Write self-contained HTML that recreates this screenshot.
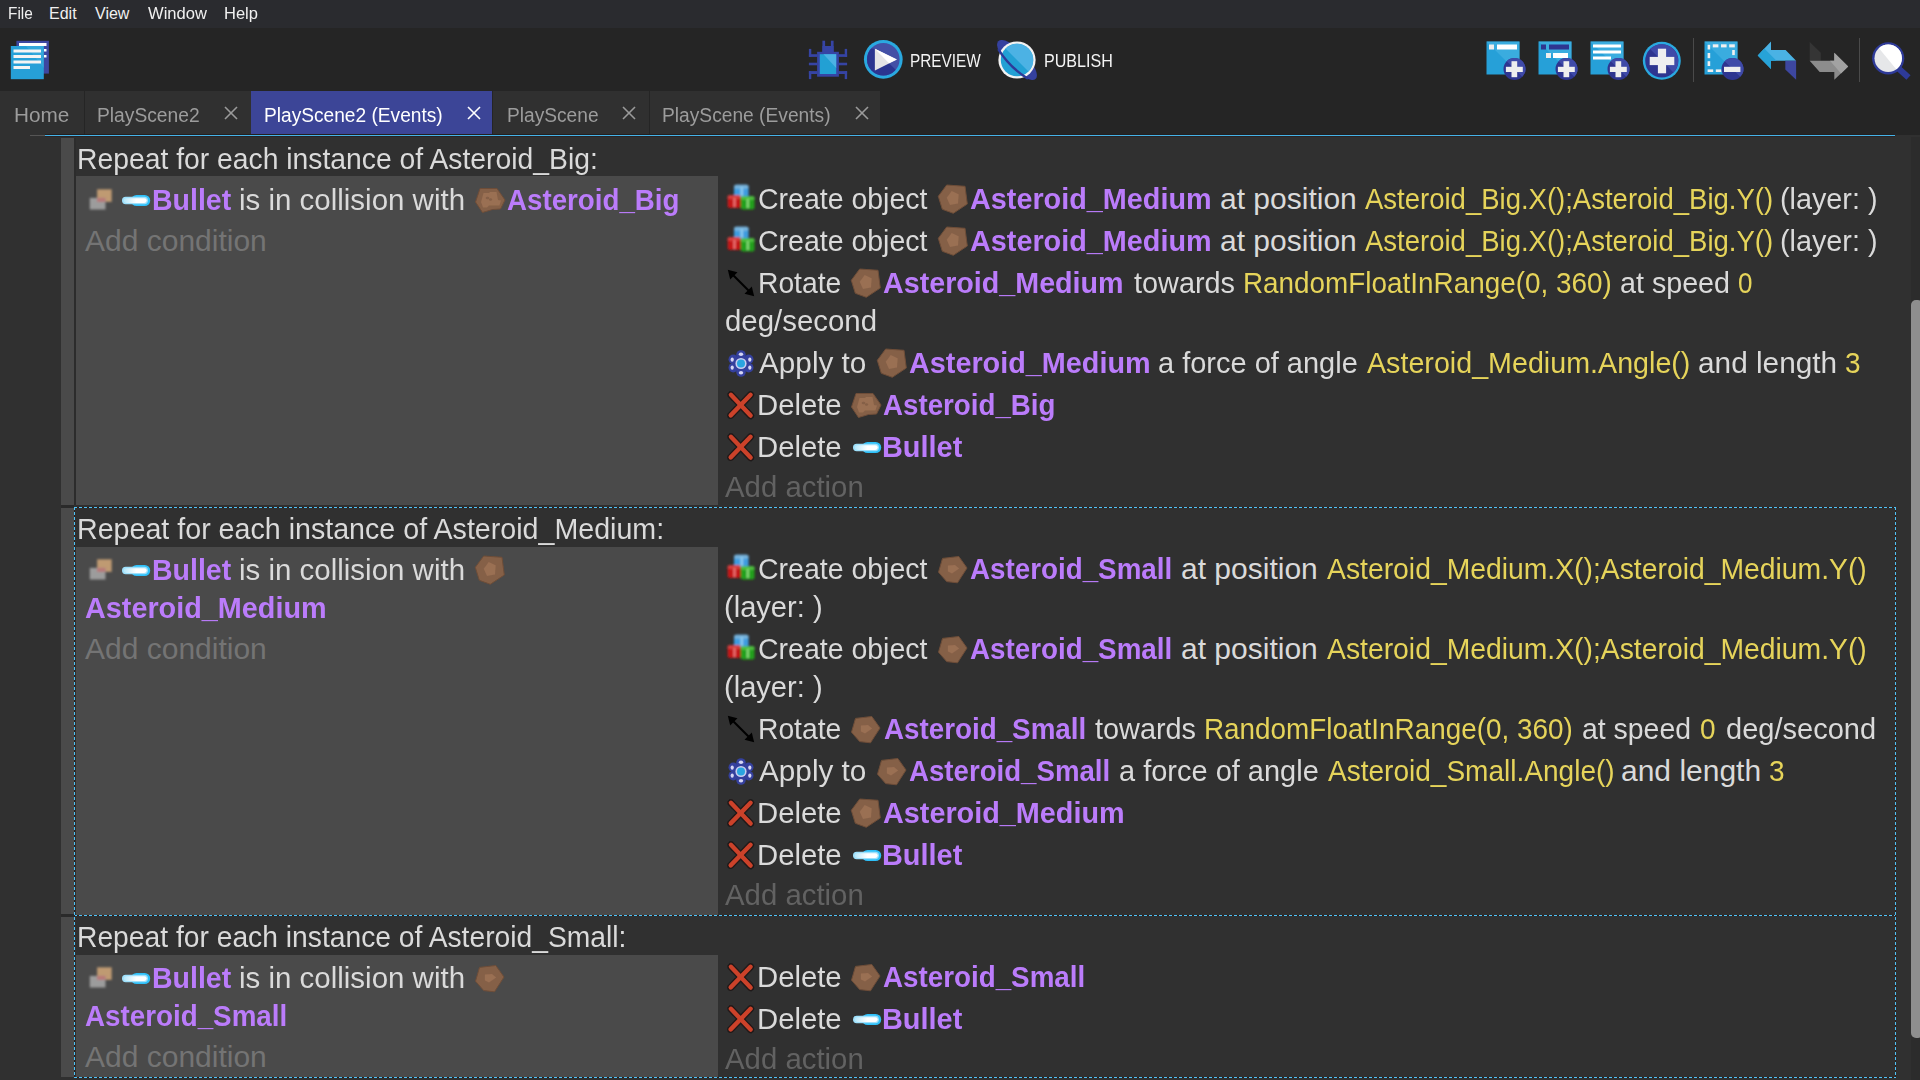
<!DOCTYPE html>
<html><head><meta charset="utf-8"><title>GDevelop</title>
<style>
html,body{margin:0;padding:0;}
body{width:1920px;height:1080px;overflow:hidden;position:relative;background:#303030;font-family:"Liberation Sans",sans-serif;}
.r{position:absolute;}
.t{position:absolute;white-space:pre;transform-origin:0 0;font-family:"Liberation Sans",sans-serif;}
.ic{position:absolute;overflow:visible;}
.dash-h{position:absolute;height:1px;background:repeating-linear-gradient(90deg,#4fc3f7 0 3px,#2a201c 3px 5px);}
.dash-v{position:absolute;width:1px;background:repeating-linear-gradient(180deg,#4fc3f7 0 3px,#2a201c 3px 5px);}
</style></head>
<body>
<!-- menubar -->
<div class="r" style="left:0;top:0;width:1920px;height:28px;background:#2a2b2f"></div>
<!-- toolbar + tabbar -->
<div class="r" style="left:0;top:28px;width:1920px;height:107px;background:#252525"></div>
<!-- tabs -->
<div class="r" style="left:0;top:91px;width:84px;height:44px;background:#303030"></div>
<div class="r" style="left:85px;top:91px;width:166px;height:44px;background:#303030"></div>
<div class="r" style="left:251px;top:91px;width:241px;height:44px;background:#3c4597"></div>
<div class="r" style="left:493px;top:91px;width:156px;height:44px;background:#303030"></div>
<div class="r" style="left:650px;top:91px;width:230px;height:44px;background:#303030"></div>
<!-- tab close X -->
<svg class="ic" style="left:224px;top:106px" width="14" height="14" viewBox="0 0 14 14"><g stroke="#9a9a9a" stroke-width="1.6"><line x1="1" y1="1" x2="13" y2="13"/><line x1="13" y1="1" x2="1" y2="13"/></g></svg>
<svg class="ic" style="left:467px;top:106px" width="14" height="14" viewBox="0 0 14 14"><g stroke="#ffffff" stroke-width="1.6"><line x1="1" y1="1" x2="13" y2="13"/><line x1="13" y1="1" x2="1" y2="13"/></g></svg>
<svg class="ic" style="left:622px;top:106px" width="14" height="14" viewBox="0 0 14 14"><g stroke="#9a9a9a" stroke-width="1.6"><line x1="1" y1="1" x2="13" y2="13"/><line x1="13" y1="1" x2="1" y2="13"/></g></svg>
<svg class="ic" style="left:855px;top:106px" width="14" height="14" viewBox="0 0 14 14"><g stroke="#9a9a9a" stroke-width="1.6"><line x1="1" y1="1" x2="13" y2="13"/><line x1="13" y1="1" x2="1" y2="13"/></g></svg>
<!-- tab underline -->
<div class="r" style="left:45px;top:134px;width:1850px;height:1px;background:#221f1f"></div>
<div class="r" style="left:30px;top:135px;width:15px;height:1px;background:#555"></div>
<div class="r" style="left:45px;top:135px;width:1850px;height:1px;background:#45b3e8"></div>
<div class="r" style="left:45px;top:136px;width:1850px;height:1px;background:#2a2424"></div>

<!-- scrollbar -->
<div class="r" style="left:1911px;top:137px;width:9px;height:943px;background:#2c2c2c"></div>
<div class="r" style="left:1911px;top:300px;width:12px;height:738px;background:#8e8e8e;border-radius:5px"></div>

<!-- event handles -->
<div class="r" style="left:61px;top:138px;width:13px;height:367px;background:#4a4a4a"></div>
<div class="r" style="left:61px;top:508px;width:13px;height:406px;background:#4a4a4a"></div>
<div class="r" style="left:61px;top:917px;width:13px;height:160px;background:#4a4a4a"></div>
<div class="r" style="left:61px;top:505px;width:13px;height:3px;background:#2a2a2a"></div>
<div class="r" style="left:61px;top:914px;width:13px;height:3px;background:#2a2a2a"></div>
<!-- condition columns -->
<div class="r" style="left:76px;top:176px;width:642px;height:329px;background:#4a4a4a"></div>
<div class="r" style="left:76px;top:547px;width:642px;height:368px;background:#4a4a4a"></div>
<div class="r" style="left:76px;top:955px;width:642px;height:122px;background:#4a4a4a"></div>
<div class="r" style="left:74px;top:138px;width:2px;height:367px;background:#2c2c2c"></div>
<!-- dashed selection borders -->
<div class="dash-h" style="left:74px;top:507px;width:1822px"></div>
<div class="dash-h" style="left:74px;top:915px;width:1822px"></div>
<div class="dash-h" style="left:74px;top:1077px;width:1822px"></div>
<div class="dash-v" style="left:74px;top:507px;height:571px"></div>
<div class="dash-v" style="left:1895px;top:507px;height:571px"></div>

<!-- toolbar icons -->
<!-- logo -->
<svg class="ic" style="left:10px;top:40px" width="40" height="40" viewBox="0 0 40 40">
 <rect x="6.4" y="0.8" width="32.5" height="32.8" fill="#3d47a0"/>
 <rect x="9" y="3" width="27.5" height="3" fill="#fff"/>
 <rect x="34" y="9" width="2.5" height="2.5" fill="#fff"/>
 <rect x="34" y="15" width="2.5" height="2.5" fill="#fff"/>
 <rect x="0.8" y="6" width="33" height="33.2" fill="#26a0d8"/>
 <polygon points="0.8,6 33.8,6 33.8,28 16,6" fill="#42b0e0" opacity="0.5"/>
 <rect x="3.5" y="9.5" width="27.5" height="3" fill="#f4f4f4"/>
 <rect x="3.5" y="15" width="27.5" height="3" fill="#f4f4f4"/>
 <rect x="3.5" y="20.5" width="27.5" height="3" fill="#f4f4f4"/>
 <rect x="3.5" y="26" width="16.5" height="3" fill="#f4f4f4"/>
</svg>
<!-- debug bug -->
<svg class="ic" style="left:808px;top:40px" width="40" height="40" viewBox="0 0 40 40">
 <g fill="#3644a4">
  <rect x="14.4" y="0.7" width="2.7" height="12"/>
  <rect x="22.9" y="0.7" width="2.7" height="12"/>
  <rect x="14.4" y="6" width="11.2" height="7"/>
  <rect x="9.1" y="11.8" width="21.8" height="24.9"/>
  <rect x="0.9" y="8.9" width="2.4" height="8"/>
  <rect x="0.9" y="14.2" width="8.5" height="2.7"/>
  <rect x="0.9" y="22.7" width="8.5" height="2.6"/>
  <rect x="0.9" y="31.1" width="8.5" height="2.9"/>
  <rect x="0.9" y="31.1" width="2.4" height="8"/>
  <rect x="36.7" y="8.9" width="2.4" height="8"/>
  <rect x="30.6" y="14.2" width="8.5" height="2.7"/>
  <rect x="30.6" y="22.7" width="8.5" height="2.6"/>
  <rect x="30.6" y="31.1" width="8.5" height="2.9"/>
  <rect x="36.7" y="31.1" width="2.4" height="8"/>
 </g>
 <rect x="11.8" y="14.2" width="16.4" height="19.8" fill="#22a0d4"/>
 <polygon points="15.5,14.2 28.2,14.2 28.2,28" fill="#4cb2e4"/>
</svg>
<!-- preview -->
<svg class="ic" style="left:864px;top:40px" width="40" height="40" viewBox="0 0 40 40">
 <defs><clipPath id="pvc"><circle cx="19.3" cy="19.3" r="16.3"/></clipPath></defs>
 <circle cx="19.3" cy="19.3" r="19.35" fill="#2aa9e0"/>
 <circle cx="19.3" cy="19.3" r="16.3" fill="#4350a6"/>
 <polygon points="0,8 10.9,8.7 10.9,30.4 25,23.3 34,32 19.3,40 0,40" fill="#2b3590" clip-path="url(#pvc)"/>
 <polygon points="10.9,8.7 32.9,19.4 10.9,30.4" fill="#e4e4e6"/>
 <polygon points="10.9,8.7 32.9,19.4 25,23.3" fill="#ffffff"/>
</svg>
<!-- publish -->
<svg class="ic" style="left:997px;top:40px" width="40" height="40" viewBox="0 0 40 40">
 <g transform="translate(20 20) rotate(45)">
  <ellipse cx="0" cy="0" rx="26.5" ry="9.5" fill="#35419f"/>
 </g>
 <circle cx="20" cy="20" r="18.6" fill="#f2f2f2"/>
 <circle cx="20" cy="20" r="16.2" fill="#22a0d4"/>
 <path d="M8.5,8.5 A16.2,16.2 0 0 1 31.5,31.5Z" fill="#4cb2e4"/>
 <g transform="translate(20 20) rotate(45)">
  <path d="M-21,5.5 Q0,10.5 21,5.5" fill="none" stroke="#2e3a98" stroke-width="2.4"/>
 </g>
</svg>
<!-- right toolbar -->
<svg class="ic" style="left:1486px;top:40.5px" width="40" height="40" viewBox="0 0 40 40">
 <rect x="0.5" y="0.5" width="33" height="33" fill="#26a0d8"/>
 <polygon points="0.5,0.5 33.5,0.5 33.5,33.5" fill="#48b4e4" opacity="0.6"/>
 <rect x="3" y="3.5" width="5" height="5" fill="#eee"/>
 <rect x="11" y="3.5" width="20" height="5" fill="#fff"/>
 <circle cx="28.5" cy="28" r="11" fill="#2e3590"/>
 <path d="M28.5,17 A11,11 0 0 1 36.3,35.8 L20.7,20.2 A11,11 0 0 1 28.5,17Z" fill="#3f4aa8"/>
 <rect x="25.5" y="20.2" width="5.7" height="16" fill="#eee"/><rect x="19.9" y="25.8" width="16.9" height="5.2" fill="#eee"/>
</svg>
<svg class="ic" style="left:1538px;top:40.5px" width="40" height="40" viewBox="0 0 40 40">
 <rect x="0.5" y="0.5" width="33" height="33" fill="#26a0d8"/>
 <polygon points="0.5,0.5 33.5,0.5 33.5,33.5" fill="#48b4e4" opacity="0.6"/>
 <rect x="3" y="3.5" width="5" height="5" fill="#2e3590"/>
 <rect x="11" y="3.5" width="20" height="5" fill="#2e3590"/>
 <rect x="8" y="12" width="5" height="5" fill="#eee"/>
 <rect x="15" y="12" width="15" height="5" fill="#fff"/>
 <circle cx="28.5" cy="28" r="11" fill="#2e3590"/>
 <path d="M28.5,17 A11,11 0 0 1 36.3,35.8 L20.7,20.2 A11,11 0 0 1 28.5,17Z" fill="#3f4aa8"/>
 <rect x="25.5" y="20.2" width="5.7" height="16" fill="#eee"/><rect x="19.9" y="25.8" width="16.9" height="5.2" fill="#eee"/>
</svg>
<svg class="ic" style="left:1590px;top:40.5px" width="40" height="40" viewBox="0 0 40 40">
 <rect x="0.5" y="0.5" width="33" height="33" fill="#26a0d8"/>
 <polygon points="0.5,0.5 33.5,0.5 33.5,33.5" fill="#48b4e4" opacity="0.6"/>
 <rect x="3" y="3.5" width="28" height="3" fill="#fff"/>
 <rect x="3" y="9.5" width="28" height="3" fill="#fff"/>
 <rect x="3" y="15.5" width="18" height="3" fill="#fff"/>
 <circle cx="28.5" cy="28" r="11" fill="#2e3590"/>
 <path d="M28.5,17 A11,11 0 0 1 36.3,35.8 L20.7,20.2 A11,11 0 0 1 28.5,17Z" fill="#3f4aa8"/>
 <rect x="25.5" y="20.2" width="5.7" height="16" fill="#eee"/><rect x="19.9" y="25.8" width="16.9" height="5.2" fill="#eee"/>
</svg>
<svg class="ic" style="left:1642px;top:40.5px" width="40" height="40" viewBox="0 0 40 40">
 <circle cx="19.8" cy="19.8" r="19" fill="#2aa9e0"/>
 <circle cx="19.8" cy="19.8" r="16.6" fill="#2e3590"/>
 <path d="M19.8,3.2 A16.6,16.6 0 0 1 31.5,31.5 L8.1,8.1 A16.6,16.6 0 0 1 19.8,3.2Z" fill="#3f4aa8"/>
 <rect x="15.9" y="7.7" width="8.2" height="24.6" fill="#eeeef0"/>
 <rect x="7.7" y="15.9" width="24.6" height="8.2" fill="#eeeef0"/>
</svg>
<div class="r" style="left:1693px;top:38px;width:1px;height:44px;background:#4a4a4a"></div>
<svg class="ic" style="left:1704px;top:40.5px" width="40" height="40" viewBox="0 0 40 40">
 <rect x="0.5" y="0.5" width="33" height="33" fill="#26a0d8"/>
 <polygon points="0.5,0.5 33.5,0.5 33.5,33.5" fill="#48b4e4" opacity="0.6"/>
 <g fill="#f0f0f0">
 <rect x="8.8" y="3.3" width="5.6" height="3.1"/><rect x="17" y="3.3" width="5.6" height="3.1"/><rect x="25.2" y="3.3" width="5.6" height="3.1"/>
 <rect x="3.6" y="3.8" width="2.6" height="4.7"/><rect x="3.6" y="12" width="2.6" height="5.2"/><rect x="3.6" y="20.2" width="2.6" height="4.8"/>
 <rect x="28.2" y="9" width="2.6" height="5.1"/>
 <rect x="3.6" y="28.4" width="5.6" height="2.6"/><rect x="11.8" y="28.4" width="5.6" height="2.6"/>
 </g>
 <circle cx="28.5" cy="28" r="11" fill="#2e3590"/>
 <path d="M28.5,17 A11,11 0 0 1 36.3,35.8 L20.7,20.2 A11,11 0 0 1 28.5,17Z" fill="#3f4aa8"/>
 <rect x="20" y="25.8" width="16.4" height="5.2" fill="#eee"/>
</svg>
<svg class="ic" style="left:1757px;top:40.5px" width="40" height="40" viewBox="0 0 40 40">
 <polygon points="0.7,14.4 14,0.6 14,9 28.6,9 39.1,19.8 14,19.8 14,28" fill="#4ab2e4"/>
 <polygon points="0.7,14.4 7.3,7.6 19.5,19.8 14,19.8 14,28" fill="#27a3d8"/>
 <polygon points="28.3,19.8 39.1,19.8 39.1,38.8 28.3,28.5" fill="#3d47a0"/>
</svg>
<svg class="ic" style="left:1809px;top:40.5px" width="40" height="40" viewBox="0 0 40 40">
 <polygon points="0.7,0.9 11.8,11.7 11.8,19.8 0.7,19.8" fill="#353535"/>
 <polygon points="0.7,19.8 25.3,19.8 25.3,11.7 39.2,25.5 25.3,38.8 25.3,30.9 10.7,30.9" fill="#8c8c8c"/>
 <polygon points="21,19.8 25.3,19.8 25.3,11.7 39.2,25.5 32,32.5" fill="#a2a2a2"/>
</svg>
<div class="r" style="left:1859px;top:38px;width:1px;height:44px;background:#4a4a4a"></div>
<svg class="ic" style="left:1871px;top:40.5px" width="40" height="40" viewBox="0 0 40 40">
 <defs><clipPath id="glass"><circle cx="17.2" cy="17.3" r="13.7"/></clipPath></defs>
 <line x1="27" y1="27" x2="37.5" y2="36.5" stroke="#2e3a98" stroke-width="6.2"/>
 <circle cx="17.2" cy="17.3" r="16.1" fill="#2e3a98"/>
 <circle cx="17.2" cy="17.3" r="13.7" fill="#e6e7e9"/>
 <polygon points="2,0 40,0 40,40 30,34" fill="#ffffff" clip-path="url(#glass)"/>
</svg>

<div class="t" style="left:8.04px;top:6px;font-size:16px;line-height:16px;color:#f0f0f0;transform:scaleX(0.9600);">File</div>
<div class="t" style="left:49.00px;top:6px;font-size:16px;line-height:16px;color:#f0f0f0;">Edit</div>
<div class="t" style="left:95.00px;top:6px;font-size:16px;line-height:16px;color:#f0f0f0;">View</div>
<div class="t" style="left:148.00px;top:6px;font-size:16px;line-height:16px;color:#f0f0f0;transform:scaleX(1.0351);">Window</div>
<div class="t" style="left:223.97px;top:6px;font-size:16px;line-height:16px;color:#f0f0f0;transform:scaleX(1.0312);">Help</div>
<div class="t" style="left:910.15px;top:52px;font-size:18px;line-height:18px;color:#f4f4f4;transform:scaleX(0.8537);">PREVIEW</div>
<div class="t" style="left:1044.11px;top:52px;font-size:18px;line-height:18px;color:#f4f4f4;transform:scaleX(0.8933);">PUBLISH</div>
<div class="t" style="left:13.96px;top:105px;font-size:20px;line-height:20px;color:#9c9c9c;transform:scaleX(1.0385);">Home</div>
<div class="t" style="left:97.04px;top:105px;font-size:20px;line-height:20px;color:#9c9c9c;transform:scaleX(0.9619);">PlayScene2</div>
<div class="t" style="left:264.04px;top:105px;font-size:20px;line-height:20px;color:#ffffff;transform:scaleX(0.9568);">PlayScene2 (Events)</div>
<div class="t" style="left:507.04px;top:105px;font-size:20px;line-height:20px;color:#9c9c9c;transform:scaleX(0.9574);">PlayScene</div>
<div class="t" style="left:662.04px;top:105px;font-size:20px;line-height:20px;color:#9c9c9c;transform:scaleX(0.9598);">PlayScene (Events)</div>
<svg width="0" height="0" style="position:absolute"><defs>
<filter id="blA" x="-30%" y="-30%" width="160%" height="160%"><feGaussianBlur stdDeviation="0.6"/></filter>
<filter id="blE" x="-30%" y="-30%" width="160%" height="160%"><feGaussianBlur stdDeviation="0.8"/></filter>
<filter id="blD" x="-30%" y="-30%" width="160%" height="160%"><feGaussianBlur stdDeviation="1.0"/></filter>
<filter id="blB" x="-30%" y="-30%" width="160%" height="160%"><feGaussianBlur stdDeviation="0.35"/></filter>
<filter id="blC" x="-30%" y="-30%" width="160%" height="160%"><feGaussianBlur stdDeviation="0.9"/></filter>
<linearGradient id="bulG" x1="0" x2="1" y1="0" y2="0"><stop offset="0" stop-color="#b4e8fc"/><stop offset="0.55" stop-color="#ffffff"/><stop offset="1" stop-color="#ffffff"/></linearGradient>
</defs></svg>
<div class="t" style="left:77.11px;top:144px;font-size:30px;line-height:30px;color:#dadada;transform:scaleX(0.9434);">Repeat for each instance of Asteroid_Big:</div>
<svg class="ic" style="left:89px;top:189px" width="24" height="22" viewBox="0 0 24 22">
  <g filter="url(#blE)">
  <rect x="8.1" y="0.3" width="14.6" height="12.6" fill="#bf9a72"/>
  <rect x="0.8" y="8.9" width="15.7" height="11.6" fill="#9c9c9c"/>
  <rect x="8.1" y="8.9" width="8.4" height="4" fill="#b87878"/>
  </g></svg>
<svg class="ic" style="left:122px;top:195px" width="29" height="12" viewBox="0 0 29 12">
  <rect x="9" y="0" width="19.2" height="11" rx="5.5" fill="#2ec0f9"/>
  <rect x="0" y="1.8" width="26" height="7.4" rx="3.7" fill="#9ee0fb"/>
  <rect x="1.7" y="3.2" width="23" height="4.8" rx="2.4" fill="url(#bulG)"/></svg>
<div class="t" style="left:152.10px;top:185px;font-size:30px;line-height:30px;color:#bb7cfb;font-weight:700;transform:scaleX(0.9506);">Bullet</div>
<div class="t" style="left:239.04px;top:185px;font-size:30px;line-height:30px;color:#dadada;transform:scaleX(0.9824);">is in collision with</div>
<svg class="ic" style="left:475px;top:188px" width="31" height="25" viewBox="0 0 31 25">
  <g filter="url(#blB)">
  <polygon points="5,0.5 22,0.5 30,12 25.5,21 17.5,21.5 7.5,24.5 0.5,14" fill="#856047" stroke="#6e4d38" stroke-width="1"/>
  <polygon points="8.5,5 14.5,5 14.5,4 21.5,4 23,12 26,12.5 24.5,17.5 14,17.5 12,19.5 8,19.5 6,14" fill="#9a6f53"/>
  <ellipse cx="12.5" cy="10" rx="1.8" ry="1.3" fill="#856047"/><ellipse cx="15.5" cy="11.5" rx="1.6" ry="1.2" fill="#856047"/>
  </g></svg>
<div class="t" style="left:507.08px;top:185px;font-size:30px;line-height:30px;color:#bb7cfb;font-weight:700;transform:scaleX(0.9239);">Asteroid_Big</div>
<div class="t" style="left:85.00px;top:226px;font-size:30px;line-height:30px;color:#747474;">Add condition</div>
<svg class="ic" style="left:727px;top:184px" width="29" height="27" viewBox="0 0 29 27">
  <g filter="url(#blC)">
  <rect x="7" y="0.7" width="14.6" height="12.4" rx="2.5" fill="#3d9ce0"/>
  <rect x="7" y="0.7" width="14.6" height="4" rx="2" fill="#78b4dc"/>
  <rect x="13.5" y="3" width="2.5" height="9" fill="#8ccaf0"/>
  <rect x="0.6" y="11.3" width="13" height="12.7" rx="2" fill="#c41212"/>
  <rect x="0.6" y="11.3" width="13" height="3.5" rx="1.5" fill="#d84040"/>
  <rect x="13.9" y="12.2" width="13.6" height="13.3" rx="2" fill="#24a01c"/>
  <rect x="13.9" y="12.2" width="13.6" height="3.5" rx="1.5" fill="#50c040"/>
  <rect x="6.5" y="14" width="2" height="9" fill="#f08080"/>
  <rect x="19.8" y="15" width="2" height="9" fill="#90e080"/>
  </g></svg>
<div class="t" style="left:758.05px;top:184px;font-size:30px;line-height:30px;color:#dadada;transform:scaleX(0.9494);">Create object</div>
<svg class="ic" style="left:938px;top:185px" width="30" height="29" viewBox="0 0 30 29">
  <g filter="url(#blB)">
  <polygon points="8.7,0 27,1.3 29.3,19 15.3,28.3 4.3,24.3 0.3,11.3" fill="#856047" stroke="#6e4d38" stroke-width="1"/>
  <polygon points="13.7,6 20.7,9.3 20,18.5 12,20 8.7,12.7" fill="#9a6f53"/>
  </g></svg>
<div class="t" style="left:970.04px;top:184px;font-size:30px;line-height:30px;color:#bb7cfb;font-weight:700;transform:scaleX(0.9598);">Asteroid_Medium</div>
<div class="t" style="left:1220.00px;top:184px;font-size:30px;line-height:30px;color:#dadada;">at position</div>
<div class="t" style="left:1365.00px;top:184px;font-size:30px;line-height:30px;color:#e6d45a;transform:scaleX(0.9167);">Asteroid_Big.X();Asteroid_Big.Y()</div>
<div class="t" style="left:1780.08px;top:184px;font-size:30px;line-height:30px;color:#dadada;transform:scaleX(0.9592);">(layer: )</div>
<svg class="ic" style="left:727px;top:226px" width="29" height="27" viewBox="0 0 29 27">
  <g filter="url(#blC)">
  <rect x="7" y="0.7" width="14.6" height="12.4" rx="2.5" fill="#3d9ce0"/>
  <rect x="7" y="0.7" width="14.6" height="4" rx="2" fill="#78b4dc"/>
  <rect x="13.5" y="3" width="2.5" height="9" fill="#8ccaf0"/>
  <rect x="0.6" y="11.3" width="13" height="12.7" rx="2" fill="#c41212"/>
  <rect x="0.6" y="11.3" width="13" height="3.5" rx="1.5" fill="#d84040"/>
  <rect x="13.9" y="12.2" width="13.6" height="13.3" rx="2" fill="#24a01c"/>
  <rect x="13.9" y="12.2" width="13.6" height="3.5" rx="1.5" fill="#50c040"/>
  <rect x="6.5" y="14" width="2" height="9" fill="#f08080"/>
  <rect x="19.8" y="15" width="2" height="9" fill="#90e080"/>
  </g></svg>
<div class="t" style="left:758.05px;top:226px;font-size:30px;line-height:30px;color:#dadada;transform:scaleX(0.9494);">Create object</div>
<svg class="ic" style="left:938px;top:227px" width="30" height="29" viewBox="0 0 30 29">
  <g filter="url(#blB)">
  <polygon points="8.7,0 27,1.3 29.3,19 15.3,28.3 4.3,24.3 0.3,11.3" fill="#856047" stroke="#6e4d38" stroke-width="1"/>
  <polygon points="13.7,6 20.7,9.3 20,18.5 12,20 8.7,12.7" fill="#9a6f53"/>
  </g></svg>
<div class="t" style="left:970.04px;top:226px;font-size:30px;line-height:30px;color:#bb7cfb;font-weight:700;transform:scaleX(0.9598);">Asteroid_Medium</div>
<div class="t" style="left:1220.00px;top:226px;font-size:30px;line-height:30px;color:#dadada;">at position</div>
<div class="t" style="left:1365.00px;top:226px;font-size:30px;line-height:30px;color:#e6d45a;transform:scaleX(0.9167);">Asteroid_Big.X();Asteroid_Big.Y()</div>
<div class="t" style="left:1780.08px;top:226px;font-size:30px;line-height:30px;color:#dadada;transform:scaleX(0.9592);">(layer: )</div>
<svg class="ic" style="left:727px;top:269px" width="28" height="28" viewBox="0 0 28 28">
  <g filter="url(#blA)">
  <line x1="5" y1="5" x2="23" y2="23" stroke="#000" stroke-width="2.2"/>
  <polygon points="0.8,0.8 10.5,3.2 3.2,10.5" fill="#000"/>
  <polygon points="27.2,27.2 17.5,24.8 24.8,17.5" fill="#000"/>
  </g></svg>
<div class="t" style="left:758.12px;top:268px;font-size:30px;line-height:30px;color:#dadada;transform:scaleX(0.9419);">Rotate</div>
<svg class="ic" style="left:851px;top:269px" width="30" height="29" viewBox="0 0 30 29">
  <g filter="url(#blB)">
  <polygon points="8.7,0 27,1.3 29.3,19 15.3,28.3 4.3,24.3 0.3,11.3" fill="#856047" stroke="#6e4d38" stroke-width="1"/>
  <polygon points="13.7,6 20.7,9.3 20,18.5 12,20 8.7,12.7" fill="#9a6f53"/>
  </g></svg>
<div class="t" style="left:883.04px;top:268px;font-size:30px;line-height:30px;color:#bb7cfb;font-weight:700;transform:scaleX(0.9558);">Asteroid_Medium</div>
<div class="t" style="left:1134.00px;top:268px;font-size:30px;line-height:30px;color:#dadada;transform:scaleX(0.9615);">towards</div>
<div class="t" style="left:1243.14px;top:268px;font-size:30px;line-height:30px;color:#e6d45a;transform:scaleX(0.9289);">RandomFloatInRange(0, 360)</div>
<div class="t" style="left:1620.04px;top:268px;font-size:30px;line-height:30px;color:#dadada;transform:scaleX(0.9558);">at speed</div>
<div class="t" style="left:1738.13px;top:268px;font-size:30px;line-height:30px;color:#e6d45a;transform:scaleX(0.8667);">0</div>
<div class="t" style="left:725.02px;top:306px;font-size:30px;line-height:30px;color:#dadada;transform:scaleX(0.9804);">deg/second</div>
<svg class="ic" style="left:727px;top:350px" width="27" height="28" viewBox="0 0 27 28">
  <g filter="url(#blA)">
  <g fill="#34409e">
  <circle cx="14" cy="5" r="4.8"/><circle cx="14" cy="22" r="4.8"/>
  <circle cx="6.3" cy="9.3" r="4.8"/><circle cx="21.7" cy="9.3" r="4.8"/>
  <circle cx="6.3" cy="17.7" r="4.8"/><circle cx="21.7" cy="17.7" r="4.8"/>
  </g>
  <g fill="#d6d6f4">
  <ellipse cx="14" cy="4.3" rx="2.2" ry="1.8"/><ellipse cx="14" cy="22.8" rx="2.2" ry="1.8"/>
  <ellipse cx="5.2" cy="9.6" rx="1.6" ry="2.2"/><ellipse cx="22.8" cy="9.6" rx="1.6" ry="2.2"/>
  <ellipse cx="5.2" cy="17.6" rx="1.6" ry="2.2"/><ellipse cx="22.8" cy="17.6" rx="1.6" ry="2.2"/>
  </g>
  <circle cx="14" cy="13.5" r="5.6" fill="#c8cdf0"/>
  <circle cx="14" cy="13.5" r="4" fill="#2aa4e0"/>
  </g></svg>
<div class="t" style="left:759.00px;top:348px;font-size:30px;line-height:30px;color:#dadada;transform:scaleX(0.9907);">Apply to</div>
<svg class="ic" style="left:877px;top:349px" width="30" height="29" viewBox="0 0 30 29">
  <g filter="url(#blB)">
  <polygon points="8.7,0 27,1.3 29.3,19 15.3,28.3 4.3,24.3 0.3,11.3" fill="#856047" stroke="#6e4d38" stroke-width="1"/>
  <polygon points="13.7,6 20.7,9.3 20,18.5 12,20 8.7,12.7" fill="#9a6f53"/>
  </g></svg>
<div class="t" style="left:909.04px;top:348px;font-size:30px;line-height:30px;color:#bb7cfb;font-weight:700;transform:scaleX(0.9598);">Asteroid_Medium</div>
<div class="t" style="left:1158.03px;top:348px;font-size:30px;line-height:30px;color:#dadada;transform:scaleX(0.9659);">a force of angle</div>
<div class="t" style="left:1367.00px;top:348px;font-size:30px;line-height:30px;color:#e6d45a;transform:scaleX(0.9555);">Asteroid_Medium.Angle()</div>
<div class="t" style="left:1698.01px;top:348px;font-size:30px;line-height:30px;color:#dadada;transform:scaleX(0.9928);">and length</div>
<div class="t" style="left:1845.07px;top:348px;font-size:30px;line-height:30px;color:#e6d45a;transform:scaleX(0.9333);">3</div>
<svg class="ic" style="left:727px;top:392px" width="26" height="27" viewBox="0 0 26 27">
  <g filter="url(#blA)">
  <g stroke="#1a1010" stroke-width="7" stroke-linecap="round" opacity="0.75"><line x1="3.9" y1="2.8" x2="23.6" y2="23.6"/><line x1="23.6" y1="2.8" x2="3.7" y2="23.4"/></g>
  <g stroke="#cc432a" stroke-width="4.4" stroke-linecap="round"><line x1="3.9" y1="2.8" x2="23.6" y2="23.6"/><line x1="23.6" y1="2.8" x2="3.7" y2="23.4"/></g>
  </g></svg>
<div class="t" style="left:757.05px;top:390px;font-size:30px;line-height:30px;color:#dadada;transform:scaleX(0.9762);">Delete</div>
<svg class="ic" style="left:851px;top:393px" width="31" height="25" viewBox="0 0 31 25">
  <g filter="url(#blB)">
  <polygon points="5,0.5 22,0.5 30,12 25.5,21 17.5,21.5 7.5,24.5 0.5,14" fill="#856047" stroke="#6e4d38" stroke-width="1"/>
  <polygon points="8.5,5 14.5,5 14.5,4 21.5,4 23,12 26,12.5 24.5,17.5 14,17.5 12,19.5 8,19.5 6,14" fill="#9a6f53"/>
  <ellipse cx="12.5" cy="10" rx="1.8" ry="1.3" fill="#856047"/><ellipse cx="15.5" cy="11.5" rx="1.6" ry="1.2" fill="#856047"/>
  </g></svg>
<div class="t" style="left:883.08px;top:390px;font-size:30px;line-height:30px;color:#bb7cfb;font-weight:700;transform:scaleX(0.9239);">Asteroid_Big</div>
<svg class="ic" style="left:727px;top:434px" width="26" height="27" viewBox="0 0 26 27">
  <g filter="url(#blA)">
  <g stroke="#1a1010" stroke-width="7" stroke-linecap="round" opacity="0.75"><line x1="3.9" y1="2.8" x2="23.6" y2="23.6"/><line x1="23.6" y1="2.8" x2="3.7" y2="23.4"/></g>
  <g stroke="#cc432a" stroke-width="4.4" stroke-linecap="round"><line x1="3.9" y1="2.8" x2="23.6" y2="23.6"/><line x1="23.6" y1="2.8" x2="3.7" y2="23.4"/></g>
  </g></svg>
<div class="t" style="left:757.05px;top:432px;font-size:30px;line-height:30px;color:#dadada;transform:scaleX(0.9762);">Delete</div>
<svg class="ic" style="left:853px;top:442px" width="29" height="12" viewBox="0 0 29 12">
  <rect x="9" y="0" width="19.2" height="11" rx="5.5" fill="#2ec0f9"/>
  <rect x="0" y="1.8" width="26" height="7.4" rx="3.7" fill="#9ee0fb"/>
  <rect x="1.7" y="3.2" width="23" height="4.8" rx="2.4" fill="url(#bulG)"/></svg>
<div class="t" style="left:882.07px;top:432px;font-size:30px;line-height:30px;color:#bb7cfb;font-weight:700;transform:scaleX(0.9630);">Bullet</div>
<div class="t" style="left:725.00px;top:472px;font-size:30px;line-height:30px;color:#626262;transform:scaleX(0.9786);">Add action</div>
<div class="t" style="left:77.09px;top:514px;font-size:30px;line-height:30px;color:#dadada;transform:scaleX(0.9542);">Repeat for each instance of Asteroid_Medium:</div>
<svg class="ic" style="left:89px;top:559px" width="24" height="22" viewBox="0 0 24 22">
  <g filter="url(#blE)">
  <rect x="8.1" y="0.3" width="14.6" height="12.6" fill="#bf9a72"/>
  <rect x="0.8" y="8.9" width="15.7" height="11.6" fill="#9c9c9c"/>
  <rect x="8.1" y="8.9" width="8.4" height="4" fill="#b87878"/>
  </g></svg>
<svg class="ic" style="left:122px;top:565px" width="29" height="12" viewBox="0 0 29 12">
  <rect x="9" y="0" width="19.2" height="11" rx="5.5" fill="#2ec0f9"/>
  <rect x="0" y="1.8" width="26" height="7.4" rx="3.7" fill="#9ee0fb"/>
  <rect x="1.7" y="3.2" width="23" height="4.8" rx="2.4" fill="url(#bulG)"/></svg>
<div class="t" style="left:152.10px;top:555px;font-size:30px;line-height:30px;color:#bb7cfb;font-weight:700;transform:scaleX(0.9506);">Bullet</div>
<div class="t" style="left:239.04px;top:555px;font-size:30px;line-height:30px;color:#dadada;transform:scaleX(0.9824);">is in collision with</div>
<svg class="ic" style="left:475px;top:556px" width="30" height="29" viewBox="0 0 30 29">
  <g filter="url(#blB)">
  <polygon points="8.7,0 27,1.3 29.3,19 15.3,28.3 4.3,24.3 0.3,11.3" fill="#856047" stroke="#6e4d38" stroke-width="1"/>
  <polygon points="13.7,6 20.7,9.3 20,18.5 12,20 8.7,12.7" fill="#9a6f53"/>
  </g></svg>
<div class="t" style="left:85.04px;top:593px;font-size:30px;line-height:30px;color:#bb7cfb;font-weight:700;transform:scaleX(0.9598);">Asteroid_Medium</div>
<div class="t" style="left:85.00px;top:634px;font-size:30px;line-height:30px;color:#747474;">Add condition</div>
<svg class="ic" style="left:727px;top:554px" width="29" height="27" viewBox="0 0 29 27">
  <g filter="url(#blC)">
  <rect x="7" y="0.7" width="14.6" height="12.4" rx="2.5" fill="#3d9ce0"/>
  <rect x="7" y="0.7" width="14.6" height="4" rx="2" fill="#78b4dc"/>
  <rect x="13.5" y="3" width="2.5" height="9" fill="#8ccaf0"/>
  <rect x="0.6" y="11.3" width="13" height="12.7" rx="2" fill="#c41212"/>
  <rect x="0.6" y="11.3" width="13" height="3.5" rx="1.5" fill="#d84040"/>
  <rect x="13.9" y="12.2" width="13.6" height="13.3" rx="2" fill="#24a01c"/>
  <rect x="13.9" y="12.2" width="13.6" height="3.5" rx="1.5" fill="#50c040"/>
  <rect x="6.5" y="14" width="2" height="9" fill="#f08080"/>
  <rect x="19.8" y="15" width="2" height="9" fill="#90e080"/>
  </g></svg>
<div class="t" style="left:758.05px;top:554px;font-size:30px;line-height:30px;color:#dadada;transform:scaleX(0.9494);">Create object</div>
<svg class="ic" style="left:938px;top:556px" width="30" height="27" viewBox="0 0 30 27">
  <g filter="url(#blB)">
  <polygon points="4.5,2.4 20.8,0.5 29,12 19.5,26.8 8.7,25.6 0.5,16.2" fill="#856047" stroke="#6e4d38" stroke-width="1"/>
  <polygon points="9.9,9.5 17,9 21.2,12.5 14,17.5 9.9,15.5" fill="#9a6f53"/>
  </g></svg>
<div class="t" style="left:970.07px;top:554px;font-size:30px;line-height:30px;color:#bb7cfb;font-weight:700;transform:scaleX(0.9259);">Asteroid_Small</div>
<div class="t" style="left:1181.00px;top:554px;font-size:30px;line-height:30px;color:#dadada;">at position</div>
<div class="t" style="left:1327.00px;top:554px;font-size:30px;line-height:30px;color:#e6d45a;transform:scaleX(0.9439);">Asteroid_Medium.X();Asteroid_Medium.Y()</div>
<div class="t" style="left:724.06px;top:592px;font-size:30px;line-height:30px;color:#dadada;transform:scaleX(0.9694);">(layer: )</div>
<svg class="ic" style="left:727px;top:634px" width="29" height="27" viewBox="0 0 29 27">
  <g filter="url(#blC)">
  <rect x="7" y="0.7" width="14.6" height="12.4" rx="2.5" fill="#3d9ce0"/>
  <rect x="7" y="0.7" width="14.6" height="4" rx="2" fill="#78b4dc"/>
  <rect x="13.5" y="3" width="2.5" height="9" fill="#8ccaf0"/>
  <rect x="0.6" y="11.3" width="13" height="12.7" rx="2" fill="#c41212"/>
  <rect x="0.6" y="11.3" width="13" height="3.5" rx="1.5" fill="#d84040"/>
  <rect x="13.9" y="12.2" width="13.6" height="13.3" rx="2" fill="#24a01c"/>
  <rect x="13.9" y="12.2" width="13.6" height="3.5" rx="1.5" fill="#50c040"/>
  <rect x="6.5" y="14" width="2" height="9" fill="#f08080"/>
  <rect x="19.8" y="15" width="2" height="9" fill="#90e080"/>
  </g></svg>
<div class="t" style="left:758.05px;top:634px;font-size:30px;line-height:30px;color:#dadada;transform:scaleX(0.9494);">Create object</div>
<svg class="ic" style="left:938px;top:636px" width="30" height="27" viewBox="0 0 30 27">
  <g filter="url(#blB)">
  <polygon points="4.5,2.4 20.8,0.5 29,12 19.5,26.8 8.7,25.6 0.5,16.2" fill="#856047" stroke="#6e4d38" stroke-width="1"/>
  <polygon points="9.9,9.5 17,9 21.2,12.5 14,17.5 9.9,15.5" fill="#9a6f53"/>
  </g></svg>
<div class="t" style="left:970.07px;top:634px;font-size:30px;line-height:30px;color:#bb7cfb;font-weight:700;transform:scaleX(0.9259);">Asteroid_Small</div>
<div class="t" style="left:1181.00px;top:634px;font-size:30px;line-height:30px;color:#dadada;">at position</div>
<div class="t" style="left:1327.00px;top:634px;font-size:30px;line-height:30px;color:#e6d45a;transform:scaleX(0.9439);">Asteroid_Medium.X();Asteroid_Medium.Y()</div>
<div class="t" style="left:724.06px;top:672px;font-size:30px;line-height:30px;color:#dadada;transform:scaleX(0.9694);">(layer: )</div>
<svg class="ic" style="left:727px;top:715px" width="28" height="28" viewBox="0 0 28 28">
  <g filter="url(#blA)">
  <line x1="5" y1="5" x2="23" y2="23" stroke="#000" stroke-width="2.2"/>
  <polygon points="0.8,0.8 10.5,3.2 3.2,10.5" fill="#000"/>
  <polygon points="27.2,27.2 17.5,24.8 24.8,17.5" fill="#000"/>
  </g></svg>
<div class="t" style="left:758.12px;top:714px;font-size:30px;line-height:30px;color:#dadada;transform:scaleX(0.9419);">Rotate</div>
<svg class="ic" style="left:851px;top:716px" width="30" height="27" viewBox="0 0 30 27">
  <g filter="url(#blB)">
  <polygon points="4.5,2.4 20.8,0.5 29,12 19.5,26.8 8.7,25.6 0.5,16.2" fill="#856047" stroke="#6e4d38" stroke-width="1"/>
  <polygon points="9.9,9.5 17,9 21.2,12.5 14,17.5 9.9,15.5" fill="#9a6f53"/>
  </g></svg>
<div class="t" style="left:884.07px;top:714px;font-size:30px;line-height:30px;color:#bb7cfb;font-weight:700;transform:scaleX(0.9259);">Asteroid_Small</div>
<div class="t" style="left:1095.00px;top:714px;font-size:30px;line-height:30px;color:#dadada;transform:scaleX(0.9615);">towards</div>
<div class="t" style="left:1204.14px;top:714px;font-size:30px;line-height:30px;color:#e6d45a;transform:scaleX(0.9289);">RandomFloatInRange(0, 360)</div>
<div class="t" style="left:1582.05px;top:714px;font-size:30px;line-height:30px;color:#dadada;transform:scaleX(0.9469);">at speed</div>
<div class="t" style="left:1700.07px;top:714px;font-size:30px;line-height:30px;color:#e6d45a;transform:scaleX(0.9333);">0</div>
<div class="t" style="left:1726.03px;top:714px;font-size:30px;line-height:30px;color:#dadada;transform:scaleX(0.9673);">deg/second</div>
<svg class="ic" style="left:727px;top:758px" width="27" height="28" viewBox="0 0 27 28">
  <g filter="url(#blA)">
  <g fill="#34409e">
  <circle cx="14" cy="5" r="4.8"/><circle cx="14" cy="22" r="4.8"/>
  <circle cx="6.3" cy="9.3" r="4.8"/><circle cx="21.7" cy="9.3" r="4.8"/>
  <circle cx="6.3" cy="17.7" r="4.8"/><circle cx="21.7" cy="17.7" r="4.8"/>
  </g>
  <g fill="#d6d6f4">
  <ellipse cx="14" cy="4.3" rx="2.2" ry="1.8"/><ellipse cx="14" cy="22.8" rx="2.2" ry="1.8"/>
  <ellipse cx="5.2" cy="9.6" rx="1.6" ry="2.2"/><ellipse cx="22.8" cy="9.6" rx="1.6" ry="2.2"/>
  <ellipse cx="5.2" cy="17.6" rx="1.6" ry="2.2"/><ellipse cx="22.8" cy="17.6" rx="1.6" ry="2.2"/>
  </g>
  <circle cx="14" cy="13.5" r="5.6" fill="#c8cdf0"/>
  <circle cx="14" cy="13.5" r="4" fill="#2aa4e0"/>
  </g></svg>
<div class="t" style="left:759.00px;top:756px;font-size:30px;line-height:30px;color:#dadada;transform:scaleX(0.9907);">Apply to</div>
<svg class="ic" style="left:877px;top:758px" width="30" height="27" viewBox="0 0 30 27">
  <g filter="url(#blB)">
  <polygon points="4.5,2.4 20.8,0.5 29,12 19.5,26.8 8.7,25.6 0.5,16.2" fill="#856047" stroke="#6e4d38" stroke-width="1"/>
  <polygon points="9.9,9.5 17,9 21.2,12.5 14,17.5 9.9,15.5" fill="#9a6f53"/>
  </g></svg>
<div class="t" style="left:909.08px;top:756px;font-size:30px;line-height:30px;color:#bb7cfb;font-weight:700;transform:scaleX(0.9213);">Asteroid_Small</div>
<div class="t" style="left:1119.03px;top:756px;font-size:30px;line-height:30px;color:#dadada;transform:scaleX(0.9659);">a force of angle</div>
<div class="t" style="left:1328.00px;top:756px;font-size:30px;line-height:30px;color:#e6d45a;transform:scaleX(0.9344);">Asteroid_Small.Angle()</div>
<div class="t" style="left:1621.00px;top:756px;font-size:30px;line-height:30px;color:#dadada;">and length</div>
<div class="t" style="left:1769.07px;top:756px;font-size:30px;line-height:30px;color:#e6d45a;transform:scaleX(0.9333);">3</div>
<svg class="ic" style="left:727px;top:800px" width="26" height="27" viewBox="0 0 26 27">
  <g filter="url(#blA)">
  <g stroke="#1a1010" stroke-width="7" stroke-linecap="round" opacity="0.75"><line x1="3.9" y1="2.8" x2="23.6" y2="23.6"/><line x1="23.6" y1="2.8" x2="3.7" y2="23.4"/></g>
  <g stroke="#cc432a" stroke-width="4.4" stroke-linecap="round"><line x1="3.9" y1="2.8" x2="23.6" y2="23.6"/><line x1="23.6" y1="2.8" x2="3.7" y2="23.4"/></g>
  </g></svg>
<div class="t" style="left:757.05px;top:798px;font-size:30px;line-height:30px;color:#dadada;transform:scaleX(0.9762);">Delete</div>
<svg class="ic" style="left:851px;top:799px" width="30" height="29" viewBox="0 0 30 29">
  <g filter="url(#blB)">
  <polygon points="8.7,0 27,1.3 29.3,19 15.3,28.3 4.3,24.3 0.3,11.3" fill="#856047" stroke="#6e4d38" stroke-width="1"/>
  <polygon points="13.7,6 20.7,9.3 20,18.5 12,20 8.7,12.7" fill="#9a6f53"/>
  </g></svg>
<div class="t" style="left:883.04px;top:798px;font-size:30px;line-height:30px;color:#bb7cfb;font-weight:700;transform:scaleX(0.9598);">Asteroid_Medium</div>
<svg class="ic" style="left:727px;top:842px" width="26" height="27" viewBox="0 0 26 27">
  <g filter="url(#blA)">
  <g stroke="#1a1010" stroke-width="7" stroke-linecap="round" opacity="0.75"><line x1="3.9" y1="2.8" x2="23.6" y2="23.6"/><line x1="23.6" y1="2.8" x2="3.7" y2="23.4"/></g>
  <g stroke="#cc432a" stroke-width="4.4" stroke-linecap="round"><line x1="3.9" y1="2.8" x2="23.6" y2="23.6"/><line x1="23.6" y1="2.8" x2="3.7" y2="23.4"/></g>
  </g></svg>
<div class="t" style="left:757.05px;top:840px;font-size:30px;line-height:30px;color:#dadada;transform:scaleX(0.9762);">Delete</div>
<svg class="ic" style="left:853px;top:850px" width="29" height="12" viewBox="0 0 29 12">
  <rect x="9" y="0" width="19.2" height="11" rx="5.5" fill="#2ec0f9"/>
  <rect x="0" y="1.8" width="26" height="7.4" rx="3.7" fill="#9ee0fb"/>
  <rect x="1.7" y="3.2" width="23" height="4.8" rx="2.4" fill="url(#bulG)"/></svg>
<div class="t" style="left:882.07px;top:840px;font-size:30px;line-height:30px;color:#bb7cfb;font-weight:700;transform:scaleX(0.9630);">Bullet</div>
<div class="t" style="left:725.00px;top:880px;font-size:30px;line-height:30px;color:#626262;transform:scaleX(0.9786);">Add action</div>
<div class="t" style="left:77.12px;top:922px;font-size:30px;line-height:30px;color:#dadada;transform:scaleX(0.9413);">Repeat for each instance of Asteroid_Small:</div>
<svg class="ic" style="left:89px;top:967px" width="24" height="22" viewBox="0 0 24 22">
  <g filter="url(#blE)">
  <rect x="8.1" y="0.3" width="14.6" height="12.6" fill="#bf9a72"/>
  <rect x="0.8" y="8.9" width="15.7" height="11.6" fill="#9c9c9c"/>
  <rect x="8.1" y="8.9" width="8.4" height="4" fill="#b87878"/>
  </g></svg>
<svg class="ic" style="left:122px;top:973px" width="29" height="12" viewBox="0 0 29 12">
  <rect x="9" y="0" width="19.2" height="11" rx="5.5" fill="#2ec0f9"/>
  <rect x="0" y="1.8" width="26" height="7.4" rx="3.7" fill="#9ee0fb"/>
  <rect x="1.7" y="3.2" width="23" height="4.8" rx="2.4" fill="url(#bulG)"/></svg>
<div class="t" style="left:152.10px;top:963px;font-size:30px;line-height:30px;color:#bb7cfb;font-weight:700;transform:scaleX(0.9506);">Bullet</div>
<div class="t" style="left:239.04px;top:963px;font-size:30px;line-height:30px;color:#dadada;transform:scaleX(0.9824);">is in collision with</div>
<svg class="ic" style="left:475px;top:965px" width="30" height="27" viewBox="0 0 30 27">
  <g filter="url(#blB)">
  <polygon points="4.5,2.4 20.8,0.5 29,12 19.5,26.8 8.7,25.6 0.5,16.2" fill="#856047" stroke="#6e4d38" stroke-width="1"/>
  <polygon points="9.9,9.5 17,9 21.2,12.5 14,17.5 9.9,15.5" fill="#9a6f53"/>
  </g></svg>
<div class="t" style="left:85.07px;top:1001px;font-size:30px;line-height:30px;color:#bb7cfb;font-weight:700;transform:scaleX(0.9259);">Asteroid_Small</div>
<div class="t" style="left:85.00px;top:1042px;font-size:30px;line-height:30px;color:#747474;">Add condition</div>
<svg class="ic" style="left:727px;top:964px" width="26" height="27" viewBox="0 0 26 27">
  <g filter="url(#blA)">
  <g stroke="#1a1010" stroke-width="7" stroke-linecap="round" opacity="0.75"><line x1="3.9" y1="2.8" x2="23.6" y2="23.6"/><line x1="23.6" y1="2.8" x2="3.7" y2="23.4"/></g>
  <g stroke="#cc432a" stroke-width="4.4" stroke-linecap="round"><line x1="3.9" y1="2.8" x2="23.6" y2="23.6"/><line x1="23.6" y1="2.8" x2="3.7" y2="23.4"/></g>
  </g></svg>
<div class="t" style="left:757.05px;top:962px;font-size:30px;line-height:30px;color:#dadada;transform:scaleX(0.9762);">Delete</div>
<svg class="ic" style="left:851px;top:964px" width="30" height="27" viewBox="0 0 30 27">
  <g filter="url(#blB)">
  <polygon points="4.5,2.4 20.8,0.5 29,12 19.5,26.8 8.7,25.6 0.5,16.2" fill="#856047" stroke="#6e4d38" stroke-width="1"/>
  <polygon points="9.9,9.5 17,9 21.2,12.5 14,17.5 9.9,15.5" fill="#9a6f53"/>
  </g></svg>
<div class="t" style="left:883.07px;top:962px;font-size:30px;line-height:30px;color:#bb7cfb;font-weight:700;transform:scaleX(0.9259);">Asteroid_Small</div>
<svg class="ic" style="left:727px;top:1006px" width="26" height="27" viewBox="0 0 26 27">
  <g filter="url(#blA)">
  <g stroke="#1a1010" stroke-width="7" stroke-linecap="round" opacity="0.75"><line x1="3.9" y1="2.8" x2="23.6" y2="23.6"/><line x1="23.6" y1="2.8" x2="3.7" y2="23.4"/></g>
  <g stroke="#cc432a" stroke-width="4.4" stroke-linecap="round"><line x1="3.9" y1="2.8" x2="23.6" y2="23.6"/><line x1="23.6" y1="2.8" x2="3.7" y2="23.4"/></g>
  </g></svg>
<div class="t" style="left:757.05px;top:1004px;font-size:30px;line-height:30px;color:#dadada;transform:scaleX(0.9762);">Delete</div>
<svg class="ic" style="left:853px;top:1014px" width="29" height="12" viewBox="0 0 29 12">
  <rect x="9" y="0" width="19.2" height="11" rx="5.5" fill="#2ec0f9"/>
  <rect x="0" y="1.8" width="26" height="7.4" rx="3.7" fill="#9ee0fb"/>
  <rect x="1.7" y="3.2" width="23" height="4.8" rx="2.4" fill="url(#bulG)"/></svg>
<div class="t" style="left:882.07px;top:1004px;font-size:30px;line-height:30px;color:#bb7cfb;font-weight:700;transform:scaleX(0.9630);">Bullet</div>
<div class="t" style="left:725.00px;top:1044px;font-size:30px;line-height:30px;color:#626262;transform:scaleX(0.9786);">Add action</div>
</body></html>
